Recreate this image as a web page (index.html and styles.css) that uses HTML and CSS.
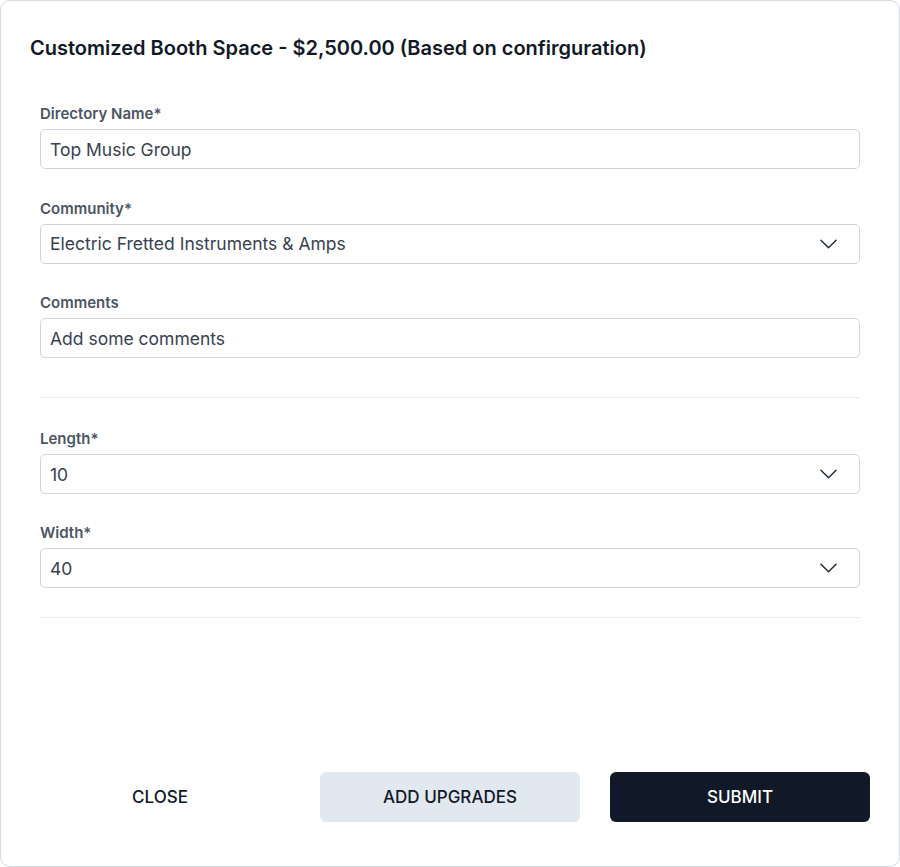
FILE: index.html
```html
<!DOCTYPE html>
<html lang="en">
<head>
<meta charset="utf-8">
<title>Customized Booth Space</title>
<link rel="stylesheet" href="styles.css">
</head>
<body>
<div class="modal">
  <h2 class="modal-title">Customized Booth Space - $2,500.00 (Based on confirguration)</h2>
  <div class="form">
    <div class="field">
      <div class="label">Directory Name*</div>
      <div class="control">Top Music Group</div>
    </div>
    <div class="field">
      <div class="label">Community*</div>
      <div class="control select">
        <span>Electric Fretted Instruments &amp; Amps</span>
        <svg class="chevron" viewBox="0 0 18 10" width="18" height="10"><path d="M1 1l8 8 8-8" fill="none" stroke="#1f2937" stroke-width="1.5" stroke-linecap="round" stroke-linejoin="round"/></svg>
      </div>
    </div>
    <div class="field field-last">
      <div class="label">Comments</div>
      <div class="control">Add some comments</div>
    </div>
    <hr class="divider divider-first">
    <div class="field field-tight">
      <div class="label">Length*</div>
      <div class="control select">
        <span>10</span>
        <svg class="chevron" viewBox="0 0 18 10" width="18" height="10"><path d="M1 1l8 8 8-8" fill="none" stroke="#1f2937" stroke-width="1.5" stroke-linecap="round" stroke-linejoin="round"/></svg>
      </div>
    </div>
    <div class="field field-tight">
      <div class="label">Width*</div>
      <div class="control select">
        <span>40</span>
        <svg class="chevron" viewBox="0 0 18 10" width="18" height="10"><path d="M1 1l8 8 8-8" fill="none" stroke="#1f2937" stroke-width="1.5" stroke-linecap="round" stroke-linejoin="round"/></svg>
      </div>
    </div>
    <hr class="divider">
  </div>
  <div class="actions">
    <button class="btn btn-ghost">CLOSE</button>
    <button class="btn btn-light">ADD UPGRADES</button>
    <button class="btn btn-dark">SUBMIT</button>
  </div>
</div>
</body>
</html>
```

FILE: styles.css
```css
* { box-sizing: border-box; }
html, body { margin: 0; padding: 0; background: #ffffff; }
body {
  font-family: Inter, "Noto Sans", "Liberation Sans", sans-serif;
  color: #111827;
}
.modal {
  width: 900px;
  height: 867px;
  border: 1px solid #d5dbe3;
  border-radius: 10px;
  background: #fff;
  display: flex;
  flex-direction: column;
  padding: 35px 29px 44px 29px;
}
.modal-title {
  margin: 0;
  font-size: 20px;
  line-height: 24px;
  font-weight: 600;
  color: #111827;
}
.form {
  padding: 44px 10px 0 10px;
  display: flex;
  flex-direction: column;
}
.field { display: flex; flex-direction: column; margin-bottom: 29.5px; }
.field-last { margin-bottom: 39px; }
.field-tight { margin-bottom: 29px; }
.label {
  font-size: 15px;
  line-height: 20px;
  font-weight: 600;
  color: #4b5563;
  margin-bottom: 5px;
}
.control {
  height: 40px;
  border: 1px solid #d1d5db;
  border-radius: 5px;
  padding: 0 9px;
  display: flex;
  align-items: center;
  font-size: 17.5px;
  color: #374151;
}
.select { justify-content: space-between; padding-right: 22px; }
.chevron { display: block; width: 17px; height: 10px; }
.divider {
  border: 0;
  height: 1px;
  background: #e8ebef;
  margin: 0 0 31px 0;
}
.actions {
  margin-top: auto;
  display: flex;
  gap: 30px;
}
.btn {
  flex: 1;
  height: 50px;
  border: 0;
  border-radius: 6px;
  font-family: Inter, "Noto Sans", "Liberation Sans", sans-serif;
  font-size: 17px;
  font-weight: 500;
  color: #111827;
  background: transparent;
}
.btn-light { background: #e2e8f0; }
.btn-dark { background: #111827; color: #fff; }
```
